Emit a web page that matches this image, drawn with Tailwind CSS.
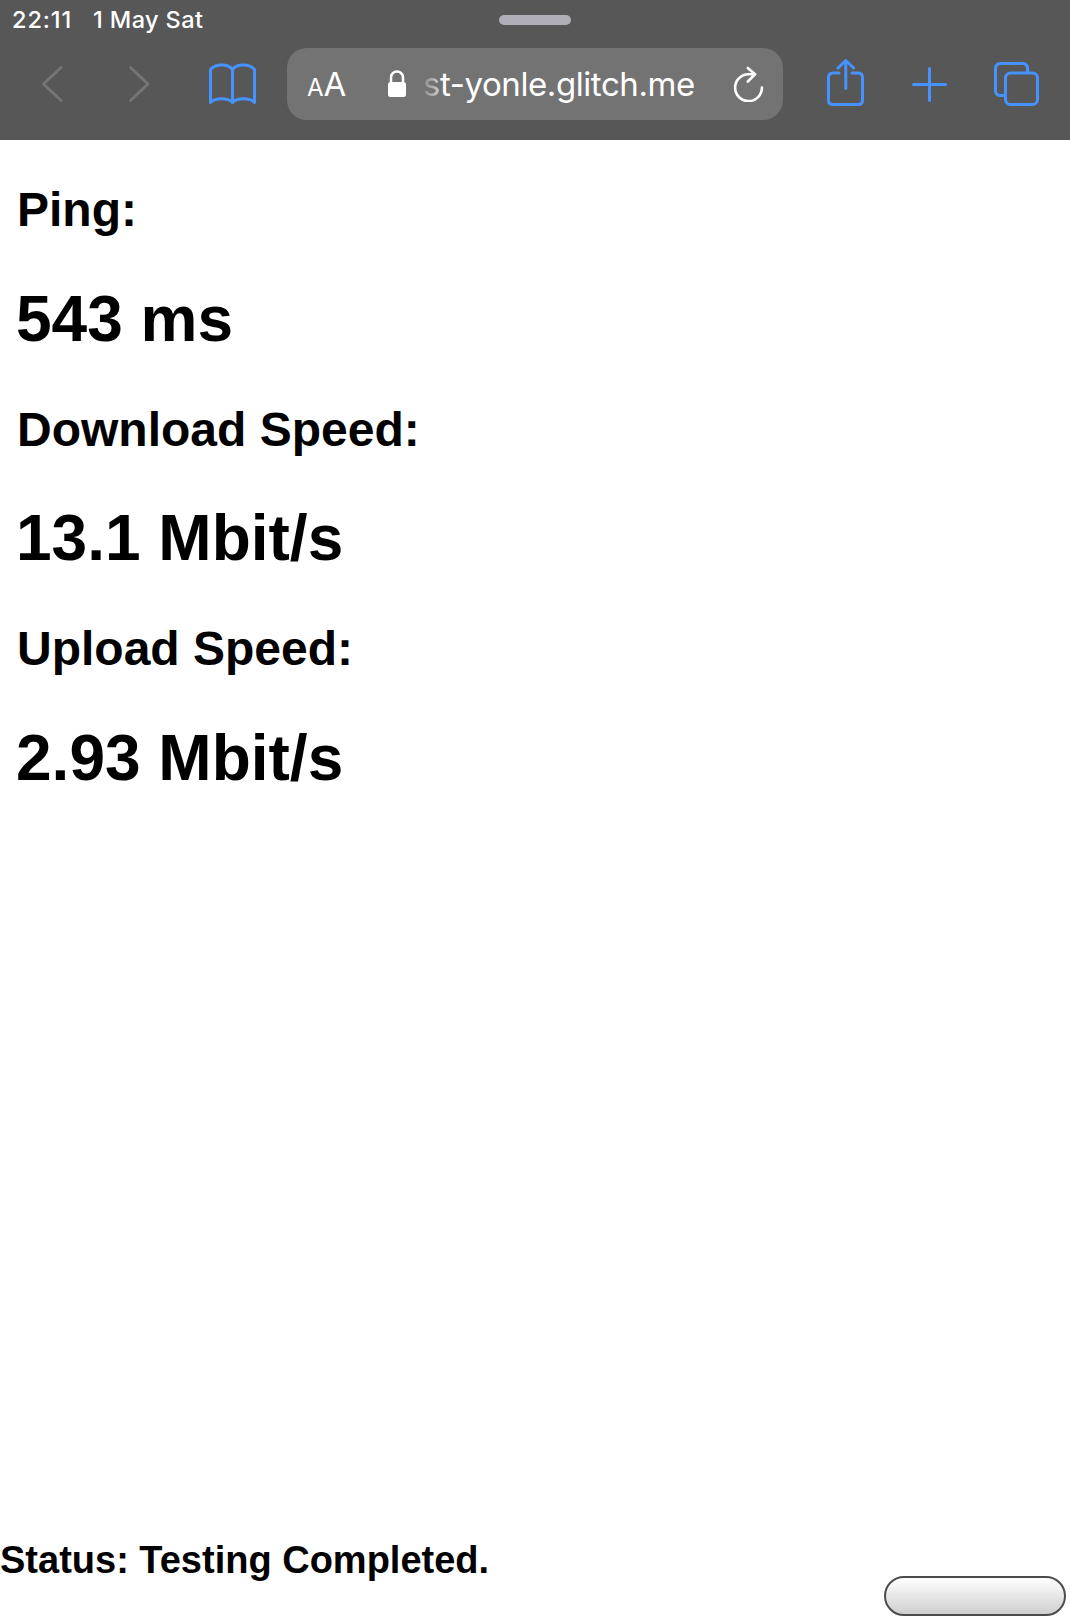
<!DOCTYPE html>
<html lang="en">
<head>
    <meta charset="UTF-8">
    <meta name="viewport" content="width=device-width, initial-scale=1.0">
    <title>Speed Test</title>
    <script src="https://cdn.jsdelivr.net/npm/@tailwindcss/browser@4"></script>
</head>
<body class="bg-white text-black min-h-screen flex flex-col font-['Liberation_Sans',Arial,sans-serif]">

    <!-- Browser bar -->
    <header class="h-[140px] bg-[#575757] text-white font-['Inter',sans-serif]">
        <div class="grid grid-cols-3 items-center h-10 pl-3">
            <div class="flex gap-[21px] text-[23.5px] leading-10 font-medium whitespace-nowrap">
                <span class="w-[60px] tracking-[0.9px]">22:11</span>
                <span class="tracking-[0.4px]">1 May Sat</span>
            </div>
            <div class="w-[72px] h-2.5 rounded-full bg-[#b0afb7] justify-self-center -translate-x-1.5"></div>
        </div>

        <nav class="flex items-center h-[88px] pl-10">
            <svg class="w-6 h-10 shrink-0" viewBox="0 0 24 40" fill="none" stroke="#757575" stroke-width="2.8" stroke-linecap="round" stroke-linejoin="round">
                <path d="M21 3.5 3.5 20 21 36.5"/>
            </svg>
            <svg class="w-6 h-10 shrink-0 ml-[63px]" viewBox="0 0 24 40" fill="none" stroke="#757575" stroke-width="2.8" stroke-linecap="round" stroke-linejoin="round">
                <path d="M3.5 3.5 21 20 3.5 36.5"/>
            </svg>
            <svg class="w-12 h-11 shrink-0 ml-[57px]" viewBox="0 0 48 44" fill="none" stroke="#4693ff" stroke-width="3" stroke-linecap="round" stroke-linejoin="round">
                <path d="M24.5 7.5C20 1.8 8 1.500 2.500 7.500V40.500C7.500 35.500 19.500 35.500 24.500 40.500C29.500 35.500 41.500 35.500 46.500 40.500V7.500C41 1.500 29 1.800 24.500 7.500V40.500"/>
            </svg>

            <div class="flex items-center w-[496px] h-[72px] ml-[31px] pl-5 rounded-[20px] bg-[#737373] shrink-0">
                <div class="flex items-baseline w-[42px] leading-10 mt-1">
                    <span class="text-[24px]">A</span><span class="text-[33px]">A</span>
                </div>
                <svg class="w-5 h-7 shrink-0 ml-[38px]" viewBox="0 0 20 28">
                    <path d="M4 13V7.5a6 6 0 0 1 12 0V13" fill="none" stroke="#fff" stroke-width="2.5"/>
                    <rect x="1" y="12" width="18" height="15" rx="2.5" fill="#fff"/>
                </svg>
                <div class="w-[290px] ml-4 text-[33px] leading-10 tracking-[-0.42px] whitespace-nowrap"><span class="bg-linear-to-r from-[#8a8a8a] to-[#d0d0d0] bg-clip-text text-transparent">s</span>t-yonle.glitch.me</div>
                <svg class="w-8 h-9 shrink-0 ml-[19px]" viewBox="0 0 32 36" fill="none" stroke="#fff" stroke-width="2.6" stroke-linecap="round" stroke-linejoin="round">
                    <path d="M23 8.300H16.500A13.400 13.400 0 1 0 29.900 21.500"/>
                    <path d="M15.800 2 23 8.300 15.800 15.500"/>
                </svg>
            </div>

            <svg class="w-10 h-[50px] shrink-0 ml-[42px]" viewBox="0 0 40 50" fill="none" stroke="#4693ff" stroke-width="3" stroke-linecap="round" stroke-linejoin="round">
                <path d="M14 14H8Q3.500 14 3.500 18.500V41Q3.500 45.500 8 45.500H33Q37.500 45.500 37.500 41V18.500Q37.500 14 33 14H27"/>
                <path d="M20.800 29.500V1.500M13 9 20.800 1.500 28.600 9"/>
            </svg>
            <svg class="w-9 h-9 shrink-0 ml-[47px]" viewBox="0 0 36 36" fill="none" stroke="#4693ff" stroke-width="3" stroke-linecap="round">
                <path d="M17.500 2.500V34.500M1.500 18.500H33.500"/>
            </svg>
            <svg class="w-12 h-12 shrink-0 ml-[45px]" viewBox="0 0 48 48" fill="none" stroke="#4693ff" stroke-width="3">
                <rect x="12.500" y="13" width="32" height="31.500" rx="5"/>
                <path d="M12 35.500H7.500Q2.500 35.500 2.500 30.500V8.500Q2.500 3.500 7.500 3.500H29.500Q34.500 3.500 34.500 8.500V13"/>
            </svg>
        </nav>
    </header>

    <!-- Results -->
    <main class="flex-1 px-4 pt-[42px] font-bold">
        <h2 class="text-[48px] leading-14 pl-px">Ping:</h2>
        <h1 class="text-[64px] leading-18 mt-[45px]">543 ms</h1>
        <h2 class="text-[48px] leading-14 mt-[47px] pl-px">Download Speed:</h2>
        <h1 class="text-[64px] leading-18 mt-[44px]">13.1 Mbit/s</h1>
        <h2 class="text-[48px] leading-14 mt-[47px] pl-px">Upload Speed:</h2>
        <h1 class="text-[64px] leading-18 mt-[45px]">2.93 Mbit/s</h1>
    </main>

    <footer class="flex justify-between items-end pr-1 pb-1">
        <h3 class="text-[38px] leading-11 font-bold pb-[34px]">Status: Testing Completed.</h3>
        <button class="w-[182px] h-10 rounded-full border-2 border-[#4c4c4e] bg-linear-to-b from-white to-[#cfcfcf]" aria-label="Start"></button>
    </footer>

</body>
</html>
